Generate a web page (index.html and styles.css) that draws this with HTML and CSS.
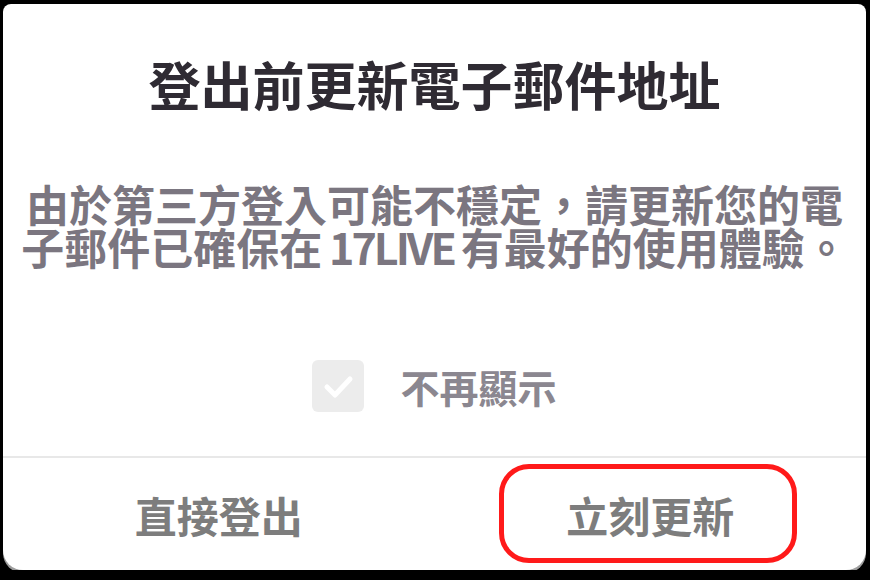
FILE: index.html
```html
<!DOCTYPE html>
<html lang="zh-Hant">
<head>
    <meta charset="UTF-8">
    <meta name="viewport" content="width=device-width, initial-scale=1.0">
    <title>登出前更新電子郵件地址</title>
    <link rel="stylesheet" href="styles.css">
</head>
<body>
    <div class="dialog">
        <h1 class="title">登出前更新電子郵件地址</h1>
        <p class="message">由於第三方登入可能不穩定，請更新您的電<br>子郵件已確保在 <span class="brand">17LIVE</span> 有最好的使用體驗。</p>
        <label class="remember">
            <span class="checkbox">
                <svg width="52" height="52" viewBox="0 0 52 52">
                    <polyline points="15,27 23,35 38,19" fill="none" stroke="#fff" stroke-width="5" stroke-linecap="round" stroke-linejoin="round"/>
                </svg>
            </span>
            <span class="remember-text">不再顯示</span>
        </label>
        <div class="actions">
            <button class="action">直接登出</button>
            <button class="action">立刻更新</button>
        </div>
        <div class="highlight"></div>
    </div>
</body>
</html>
```

FILE: styles.css
```css
body {
    margin: 0;
    padding: 0;
    background-color: #000;
    font-family: "Noto Sans CJK TC", "Noto Sans", sans-serif;
}

.dialog {
    position: relative;
    width: 863px;
    height: 566px;
    margin: 4px 0 0 3px;
    background: #fff;
    border-radius: 8px 8px 20px 20px;
    box-shadow: 0 3px 0 #9d9d9d;
    display: flex;
    flex-direction: column;
}

.title {
    margin: 50px 0 0;
    font-size: 52px;
    line-height: 60px;
    font-weight: 700;
    color: #2f2b33;
    text-align: center;
}

.message {
    margin: 68px 0 0;
    font-size: 43px;
    line-height: 43px;
    font-weight: 700;
    color: #7b7680;
    text-align: center;
    word-spacing: -3px;
}

.brand {
    letter-spacing: -3px;
}

.remember {
    display: flex;
    align-items: center;
    justify-content: center;
    gap: 36px;
    margin-top: 90px;
}

.checkbox {
    display: block;
    width: 52px;
    height: 52px;
    border-radius: 6px;
    background: #ececec;
}

.checkbox svg {
    display: block;
}

.remember-text {
    font-size: 39px;
    font-weight: 700;
    color: #8b8790;
}

.actions {
    margin-top: auto;
    height: 112px;
    border-top: 2px solid #e8e8e8;
    display: flex;
}

.action {
    flex: 1;
    border: none;
    background: none;
    font-family: inherit;
    font-size: 42px;
    font-weight: 700;
    color: #7d7d7d;
    padding: 0;
    cursor: pointer;
}

.highlight {
    position: absolute;
    left: 496px;
    top: 460px;
    width: 288px;
    height: 89px;
    border: 5px solid #ff1a1a;
    border-radius: 30px;
}
```
